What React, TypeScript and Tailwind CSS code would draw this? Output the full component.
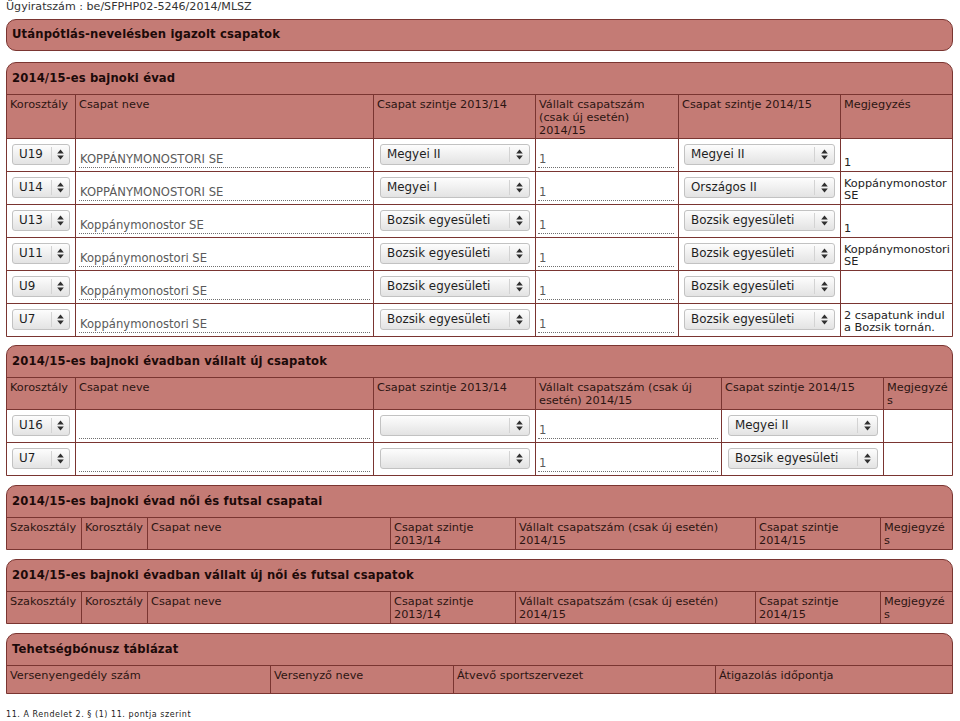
import React from "react";

function Arrows() {
  return (
    <svg width="7" height="11" viewBox="0 0 7 11" className="shrink-0">
      <path d="M3.5 0.5L6.8 4.5H0.2Z" fill="#2f2f2f" />
      <path d="M3.5 10.5L6.8 6.5H0.2Z" fill="#2f2f2f" />
    </svg>
  );
}

function Sel({ label, cls, aw }: { label?: string; cls: string; aw: string }) {
  return (
    <div
      className={
        "flex h-[21px] items-center rounded-[3px] border border-[#c2c2c2] bg-linear-to-b from-[#fdfdfd] to-[#e3e3e3] " +
        cls
      }
    >
      <span className="flex-1 truncate pl-[6px] text-[11.9px] leading-[19px] text-[#1f1f1f]">{label}</span>
      <span className="h-[15px] w-px bg-[#d3d3d3]" />
      <span className={"flex justify-center " + aw}>
        <Arrows />
      </span>
    </div>
  );
}

function Inp({ v, cls }: { v?: string; cls: string }) {
  return (
    <div
      className={
        "h-[17px] border-b border-dotted border-[#6f6f6f] pl-[1px] text-[11.6px] leading-[16px] text-[#5a5a5a] " + cls
      }
    >
      {v}
    </div>
  );
}

function Panel({ title, children, cls }: { title: string; children?: React.ReactNode; cls: string }) {
  return (
    <div className={"w-[947px] overflow-hidden rounded-t-[10px] border border-[#7a3531] bg-[#c47b75] " + cls}>
      <div className="flex h-[31px] items-center pl-[5px] text-[11.6px] font-bold tracking-[0.15px] text-[#1c0a09]">
        {title}
      </div>
      {children}
    </div>
  );
}

function Head({ cols, h, cells }: { cols: string; h: string; cells: React.ReactNode[] }) {
  return (
    <div className={"grid border-t border-[#7a3531] text-[11.3px] leading-[13px] text-[#2c1512] " + cols + " " + h}>
      {cells.map((c, i) => (
        <div
          key={i}
          className={
            (i < cells.length - 1 ? "border-r border-[#7a3531] " : "") + "overflow-hidden px-[3px] pt-[3px]"
          }
        >
          {c}
        </div>
      ))}
    </div>
  );
}

const main = [
  { age: "U19", name: "KOPPÁNYMONOSTORI SE", l1: "Megyei II", l2: "Megyei II", note: ["1"] },
  { age: "U14", name: "KOPPÁNYMONOSTORI SE", l1: "Megyei I", l2: "Országos II", note: ["Koppánymonostor", "SE"] },
  { age: "U13", name: "Koppánymonostor SE", l1: "Bozsik egyesületi", l2: "Bozsik egyesületi", note: ["1"] },
  {
    age: "U11",
    name: "Koppánymonostori SE",
    l1: "Bozsik egyesületi",
    l2: "Bozsik egyesületi",
    note: ["Koppánymonostori", "SE"],
  },
  { age: "U9", name: "Koppánymonostori SE", l1: "Bozsik egyesületi", l2: "Bozsik egyesületi", note: [] },
  {
    age: "U7",
    name: "Koppánymonostori SE",
    l1: "Bozsik egyesületi",
    l2: "Bozsik egyesületi",
    note: ["2 csapatunk indul", "a Bozsik tornán."],
  },
];

const newTeams = [
  { age: "U16", l2: "Megyei II" },
  { age: "U7", l2: "Bozsik egyesületi" },
];

const fourCells: React.ReactNode[] = [
  "Szakosztály",
  "Korosztály",
  "Csapat neve",
  <>
    Csapat szintje
    <br />
    2013/14
  </>,
  <>
    Vállalt csapatszám (csak új esetén)
    <br />
    2014/15
  </>,
  <>
    Csapat szintje
    <br />
    2014/15
  </>,
  <>
    Megjegyzé
    <br />s
  </>,
];

export default function App() {
  return (
    <div className="min-h-[721px] w-[960px] bg-white font-['DejaVu_Sans',sans-serif]">
      <div className="h-[19px] pl-[6px] text-[11.1px] leading-[13px] text-[#333]">
        Ügyiratszám : be/SFPHP02-5246/2014/MLSZ
      </div>
      <div className="ml-[6px] flex flex-col">
        <div className="flex h-[32px] w-[947px] items-center rounded-[10px] border border-[#7a3531] bg-[#c47b75] pl-[5px] text-[11.6px] font-bold tracking-[0.15px] text-[#1c0a09]">
          Utánpótlás-nevelésben igazolt csapatok
        </div>

        <Panel title="2014/15-es bajnoki évad" cls="mt-[11px]">
          <Head
            cols="grid-cols-[69px_298px_162px_143px_162px_1fr]"
            h="h-[44px]"
            cells={[
              "Korosztály",
              "Csapat neve",
              "Csapat szintje 2013/14",
              <>
                Vállalt csapatszám
                <br />
                (csak új esetén)
                <br />
                2014/15
              </>,
              "Csapat szintje 2014/15",
              "Megjegyzés",
            ]}
          />
          {main.map((r, i) => (
            <div
              key={i}
              className="grid h-[33px] grid-cols-[69px_298px_162px_143px_162px_1fr] border-t border-[#7a3531] bg-white"
            >
              <div className="border-r border-[#7a3531] pl-[5px] pt-[5px]">
                <Sel label={r.age} cls="w-[58px]" aw="w-[17px]" />
              </div>
              <div className="flex items-end border-r border-[#7a3531] px-[3px] pb-[3px]">
                <Inp v={r.name} cls="w-full" />
              </div>
              <div className="border-r border-[#7a3531] pl-[6px] pt-[5px]">
                <Sel label={r.l1} cls="w-[150px]" aw="w-[19px]" />
              </div>
              <div className="flex items-end border-r border-[#7a3531] pb-[3px] pl-[2px] pr-[4px]">
                <Inp v="1" cls="w-full" />
              </div>
              <div className="border-r border-[#7a3531] pl-[5px] pt-[5px]">
                <Sel label={r.l2} cls="w-[151px]" aw="w-[19px]" />
              </div>
              <div className="flex flex-col justify-end pb-[2px] pl-[3px] text-[11.3px] leading-[12px] text-[#222]">
                {r.note.map((t, j) => (
                  <div key={j}>{t}</div>
                ))}
              </div>
            </div>
          ))}
        </Panel>

        <Panel title="2014/15-es bajnoki évadban vállalt új csapatok" cls="mt-[8px]">
          <Head
            cols="grid-cols-[69px_298px_162px_186px_162px_1fr]"
            h="h-[32px]"
            cells={[
              "Korosztály",
              "Csapat neve",
              "Csapat szintje 2013/14",
              <>
                Vállalt csapatszám (csak új
                <br />
                esetén) 2014/15
              </>,
              "Csapat szintje 2014/15",
              <>
                Megjegyzé
                <br />s
              </>,
            ]}
          />
          {newTeams.map((r, i) => (
            <div
              key={i}
              className="grid h-[33px] grid-cols-[69px_298px_162px_186px_162px_1fr] border-t border-[#7a3531] bg-white"
            >
              <div className="border-r border-[#7a3531] pl-[5px] pt-[5px]">
                <Sel label={r.age} cls="w-[58px]" aw="w-[17px]" />
              </div>
              <div className="flex items-end border-r border-[#7a3531] px-[3px] pb-[3px]">
                <Inp cls="w-full" />
              </div>
              <div className="border-r border-[#7a3531] pl-[6px] pt-[5px]">
                <Sel cls="w-[150px]" aw="w-[19px]" />
              </div>
              <div className="flex items-end border-r border-[#7a3531] pb-[3px] pl-[2px] pr-[3px]">
                <Inp v="1" cls="w-full" />
              </div>
              <div className="border-r border-[#7a3531] pl-[6px] pt-[5px]">
                <Sel label={r.l2} cls="w-[150px]" aw="w-[19px]" />
              </div>
              <div />
            </div>
          ))}
        </Panel>

        <Panel title="2014/15-es bajnoki évad női és futsal csapatai" cls="mt-[9px]">
          <Head cols="grid-cols-[75px_66px_243px_125px_240px_125px_1fr]" h="h-[32px]" cells={fourCells} />
        </Panel>

        <Panel title="2014/15-es bajnoki évadban vállalt új női és futsal csapatok" cls="mt-[9px]">
          <Head cols="grid-cols-[75px_66px_243px_125px_240px_125px_1fr]" h="h-[32px]" cells={fourCells} />
        </Panel>

        <Panel title="Tehetségbónusz táblázat" cls="mt-[9px]">
          <Head
            cols="grid-cols-[264px_183px_262px_1fr]"
            h="h-[28px]"
            cells={["Versenyengedély szám", "Versenyző neve", "Átvevő sportszervezet", "Átigazolás időpontja"]}
          />
        </Panel>

        <div className="mt-[16px] text-[8px] leading-[10px] tracking-[0.55px] text-[#222]">
          11. A Rendelet 2. § (1) 11. pontja szerint
        </div>
      </div>
    </div>
  );
}
